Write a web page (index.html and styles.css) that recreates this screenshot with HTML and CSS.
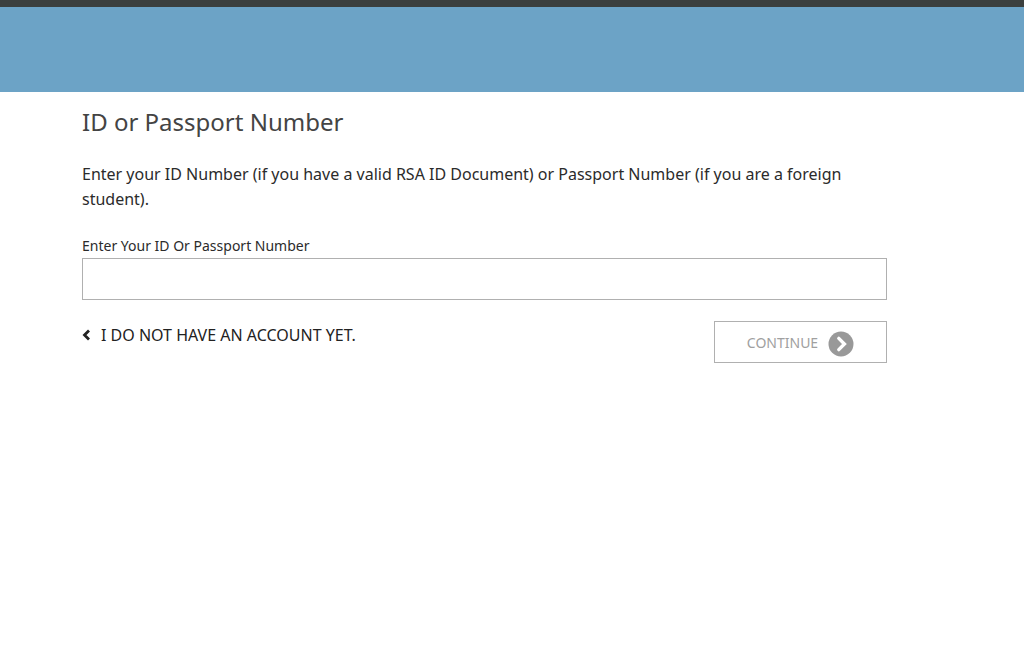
FILE: index.html
```html
<!DOCTYPE html>
<html lang="en">
<head>
<meta charset="utf-8">
<meta name="viewport" content="width=device-width, initial-scale=1">
<title>ID or Passport Number</title>
<link rel="stylesheet" href="styles.css">
</head>
<body>
<header class="banner"></header>
<main class="page">
  <h1 class="title">ID or Passport Number</h1>
  <p class="intro">Enter your ID Number (if you have a valid RSA ID Document) or Passport Number (if you are a foreign student).</p>
  <form class="form">
    <label class="label" for="id-number">Enter Your ID Or Passport Number</label>
    <input class="field" id="id-number" name="id-number" type="text">
    <div class="actions">
      <a class="link" href="#">
        <svg class="chevron" viewBox="0 0 9 12" aria-hidden="true"><path d="M7 1.5 2.5 6 7 10.5" fill="none" stroke="currentColor" stroke-width="2.8"/></svg>
        I DO NOT HAVE AN ACCOUNT YET.
      </a>
      <button class="continue" type="button">
        CONTINUE
        <svg class="circle" viewBox="0 0 26 26" aria-hidden="true"><circle cx="13" cy="13" r="12.5" fill="#999"/><path d="M10.8 7.4 16.4 13l-5.6 5.6" fill="none" stroke="#fff" stroke-width="3.4" stroke-linecap="round"/></svg>
      </button>
    </div>
  </form>
</main>
</body>
</html>
```
FILE: styles.css
```css
* {
  box-sizing: border-box;
}

body {
  margin: 0;
  background: #fff;
  color: #2b2b2b;
  font-family: "Segoe UI", "Noto Sans", sans-serif;
}

.banner {
  height: 92px;
  background: #6ca3c6;
  border-top: 7px solid #3b3f3e;
}

.page {
  margin: 0 137px 0 82px;
}

.title {
  margin: 0;
  padding-top: 12px;
  color: #444;
  font-size: 24px;
  font-weight: 400;
  line-height: 36px;
}

.intro {
  margin: 22px 0 24px;
  font-size: 16px;
  line-height: 25px;
}

.label {
  display: block;
  font-size: 14px;
  line-height: 20px;
}

.field {
  display: block;
  width: 100%;
  height: 42px;
  margin-top: 2px;
  padding: 0 12px;
  border: 1px solid #b0b0b0;
  border-radius: 0;
  background: #fff;
  font: inherit;
}

.actions {
  display: flex;
  justify-content: space-between;
  align-items: flex-start;
  margin-top: 21px;
}

.link {
  display: flex;
  align-items: center;
  gap: 10px;
  padding-top: 1px;
  color: #222;
  font-size: 16px;
  line-height: 26px;
  text-decoration: none;
}

.chevron {
  width: 9px;
  height: 12px;
}

.continue {
  display: flex;
  align-items: center;
  justify-content: center;
  gap: 10px;
  width: 173px;
  height: 42px;
  padding: 0;
  border: 1px solid #b0b0b0;
  background: #fff;
  color: #a0a0a0;
  font: inherit;
  font-size: 14px;
}

.circle {
  width: 26px;
  height: 26px;
  margin-top: 4px;
}
```
